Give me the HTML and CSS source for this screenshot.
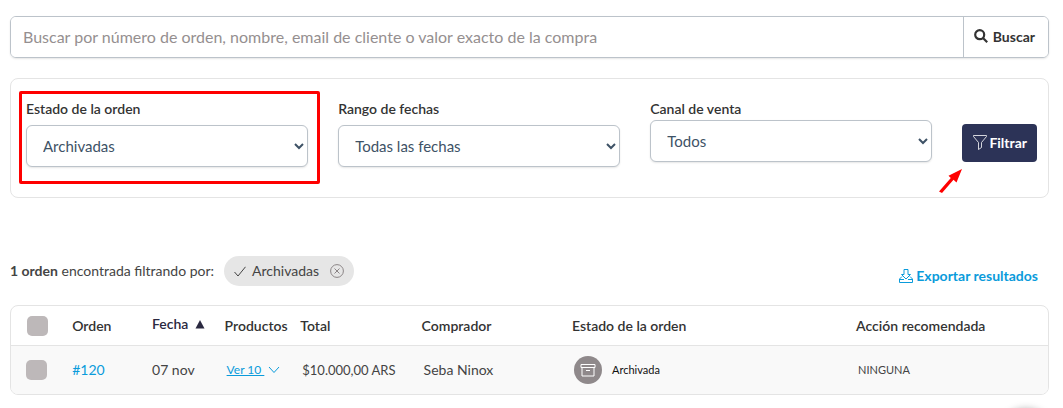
FILE: index.html
```
<!DOCTYPE html>
<html lang="es">
	<head>
		<meta charset="utf-8">
		<title>Órdenes</title>
		<link rel="stylesheet" href="styles.css">
	</head>
	<body>
		<form class="search">
			<input class="search-input" type="text" aria-label="Buscar" placeholder="Buscar por número de orden, nombre, email de cliente o valor exacto de la compra">
			<button class="search-btn" type="submit">
				<svg width="14" height="14" viewBox="0 0 14 14"><circle cx="5.7" cy="5.7" r="4.5"/><path d="M9 9l4.2 4.2"/></svg>
				Buscar
			</button>
		</form>

		<form class="filters">
			<div class="field marked">
				<label for="estado">Estado de la orden</label>
				<select id="estado"><option>Archivadas</option></select>
			</div>
			<div class="field">
				<label for="fechas">Rango de fechas</label>
				<select id="fechas"><option>Todas las fechas</option></select>
			</div>
			<div class="field tight">
				<label for="canal">Canal de venta</label>
				<select id="canal"><option>Todos</option></select>
			</div>
			<div class="action">
				<button class="filter-btn" type="submit">
					<svg width="14" height="15" viewBox="0 0 14 15"><path d="M.5 .5h13v1L8.500 7.500v5l-3 2v-7L.5 1.500z"/></svg>
					Filtrar
				</button>
				<svg class="arrow" width="24" height="26" viewBox="0 0 24 26"><path d="M23 1L17.500 14.500 14.500 11.800 3 25 0 23.500 11.800 10 9.500 7.800z"/></svg>
			</div>
		</form>

		<div class="results">
			<div class="summary">
				<span><b>1 orden</b> encontrada filtrando por:</span>
				<span class="chip">
					<svg width="12" height="11" viewBox="0 0 12 11"><path d="M.5 6l3.500 4L11.500 .800"/></svg>
					Archivadas
					<button class="chip-close" type="button" aria-label="Quitar">
						<svg width="14" height="14" viewBox="0 0 14 14"><circle cx="7" cy="7" r="6.400"/><path d="M4.500 4.500l5 5M9.500 4.500l-5 5"/></svg>
					</button>
				</span>
			</div>
			<a class="export" href="#">
				<svg width="14" height="14" viewBox="0 0 14 14"><path d="M5 .5h4v5h2.500L7 10 2.500 5.500H5zM3 7.500L.5 10v3.500h13V10L11 7.500M.5 10.500h4.500M9 10.500h4.500"/></svg>
				Exportar resultados
			</a>
		</div>

		<div class="orders-box">
			<table class="orders">
				<colgroup>
					<col class="c-check"><col class="c-order"><col class="c-date"><col class="c-products">
					<col class="c-total"><col class="c-buyer"><col class="c-status"><col>
				</colgroup>
				<thead>
					<tr>
						<th><input class="check" type="checkbox" aria-label="Seleccionar todas"></th>
						<th>Orden</th>
						<th class="sorted">Fecha <svg width="10" height="10" viewBox="0 0 10 10"><path d="M5 1l4.500 8.500H.5z"/></svg></th>
						<th>Productos</th>
						<th>Total</th>
						<th>Comprador</th>
						<th>Estado de la orden</th>
						<th>Acción recomendada</th>
					</tr>
				</thead>
				<tbody>
					<tr>
						<td><input class="check" type="checkbox" aria-label="Seleccionar orden 120"></td>
						<td><a class="order-link" href="#">#120</a></td>
						<td>07 nov</td>
						<td class="inset"><a class="more" href="#"><u>Ver 10&nbsp;</u><svg width="12" height="8" viewBox="0 0 12 8"><path d="M1 1l5 5.500L11 1"/></svg></a></td>
						<td class="inset total">$10.000,00 ARS</td>
						<td class="inset">Seba Ninox</td>
						<td class="inset">
							<span class="status">
								<svg width="28" height="28" viewBox="0 0 28 28"><circle cx="14" cy="14" r="14"/><path d="M7 8.500h14v3H7zM8 11.500V20h12v-8.500M12 14.500h4"/></svg>
								Archivada
							</span>
						</td>
						<td class="inset none">NINGUNA</td>
					</tr>
				</tbody>
			</table>
		</div>

		<div class="bubble"></div>
	</body>
</html>
```

FILE: styles.css
```
*{
	box-sizing: border-box;
}
body{
	margin: 0;
	padding: 16px 14px 0 10px;
	background: #fff;
	color: #444;
	font: 14px/20px Lato, "Open Sans", sans-serif;
}
svg{
	display: block;
	flex: none;
	fill: none;
	stroke: currentColor;
}
input,select,button{
	font-family: inherit;
}
button{
	display: flex;
	align-items: center;
	border: 0;
	cursor: pointer;
}
a{
	color: #0a9bdb;
}

/* buscador */
.search{
	display: flex;
	height: 42px;
	border: 1px solid #bcc3ca;
	border-radius: 6px;
	box-shadow: 0 1px 2px rgba(0,0,0,.1);
	overflow: hidden;
}
.search-input{
	flex: 1;
	min-width: 0;
	padding: 0 12px 2px;
	border: 0;
	outline: 0;
	font-size: 16px;
}
.search-input::placeholder{
	color: #958f90;
}
.search-btn{
	gap: 5px;
	padding: 0 13px 2px 10px;
	border-left: 1px solid #bcc3ca;
	background: #fff;
	color: #333;
	font-size: 14px;
	font-weight: bold;
}
.search-btn svg{
	stroke-width: 2.2;
}

/* filtros */
.filters{
	display: grid;
	grid-template-columns: 1fr 1fr 1fr auto;
	gap: 30px;
	margin-top: 20px;
	padding: 20px 11px 30px 15px;
	border: 1px solid #e4e4e4;
	border-radius: 8px;
}
.field{
	position: relative;
	display: flex;
	flex-direction: column;
	gap: 6px;
}
.field.tight{
	gap: 1px;
}
.field label{
	color: #333;
	font-weight: 600;
}
.field select{
	height: 42px;
	padding: 0 0 0 12px;
	border: 1px solid #bcc3ca;
	border-radius: 6px;
	background: #fff;
	box-shadow: 0 1px 2px rgba(0,0,0,.1);
	color: #3e5266;
	font-size: 15px;
}
.marked::after{
	content: "";
	position: absolute;
	inset: -8px -12px -17px -7px;
	border: 3px solid #fe0000;
	border-radius: 2px;
	pointer-events: none;
}
.action{
	position: relative;
	padding-top: 25px;
}
.filter-btn{
	gap: 2px;
	height: 38px;
	padding: 0 10px 2px 11px;
	border-radius: 4px;
	background: #2c3357;
	color: #fff;
	font-size: 14px;
	font-weight: bold;
}
.filter-btn svg{
	stroke-width: .8;
}
.arrow{
	position: absolute;
	top: 69px;
	left: -23px;
	fill: #fe0000;
	stroke: none;
}

/* resultados */
.results{
	display: flex;
	justify-content: space-between;
	margin-top: 58px;
}
.summary{
	display: flex;
	align-items: center;
	gap: 10px;
}
.chip{
	display: flex;
	align-items: center;
	gap: 6px;
	height: 30px;
	padding: 0 10px;
	border-radius: 15px;
	background: #e6e6e6;
}
.chip-close{
	margin-left: 5px;
	padding: 0;
	background: none;
	color: #8b8586;
}
.export{
	display: flex;
	align-items: center;
	gap: 3px;
	margin: 10px 11px 0 0;
	font-weight: bold;
	text-decoration: none;
}

/* tabla */
.orders-box{
	margin-top: 19px;
	border: 1px solid #e4e4e4;
	border-radius: 8px;
	overflow: hidden;
}
.orders{
	width: 100%;
	border-collapse: collapse;
	table-layout: fixed;
}
.c-check{ width: 5.9%; }
.c-order{ width: 7.7%; }
.c-date{ width: 7%; }
.c-products{ width: 7.3%; }
.c-total{ width: 11.7%; }
.c-buyer{ width: 14.5%; }
.c-status{ width: 27.4%; }
.orders th,.orders td{
	padding: 0;
	text-align: left;
	white-space: nowrap;
}
.orders th{
	height: 39px;
	padding-top: 2px;
	border-bottom: 1px solid #e4e4e4;
	color: #333;
	font-weight: 600;
}
.orders th.sorted{
	padding-bottom: 4px;
	color: #2a2840;
}
.sorted svg{
	display: inline-block;
	margin-left: 3px;
	fill: currentColor;
	stroke: none;
}
.orders td{
	height: 49px;
	background: #f9f9f9;
}
.orders td.inset{
	padding-left: 2px;
}
.check{
	display: block;
	width: 21px;
	height: 20px;
	margin: 0 0 0 16px;
	border-radius: 5px;
	background: #bdb8b9;
	appearance: none;
}
td .check{
	margin-left: 15px;
}
.order-link{
	text-decoration: none;
}
.more{
	display: flex;
	align-items: center;
	gap: 4px;
	font-size: 12px;
	text-decoration: none;
}
.total{
	font-size: 13px;
}
.status{
	display: flex;
	align-items: center;
	gap: 10px;
	color: #111;
	font-size: 11px;
}
.status circle{
	fill: #8f898b;
	stroke: none;
}
.status path{
	stroke: #fff;
}
.orders td.none{
	font-size: 11px;
}

/* botón flotante, asoma solo la sombra */
.bubble{
	position: fixed;
	right: 10px;
	bottom: -56px;
	width: 54px;
	height: 54px;
	border-radius: 50%;
	box-shadow: 0 0 8px rgba(0,0,0,.4);
}
```
